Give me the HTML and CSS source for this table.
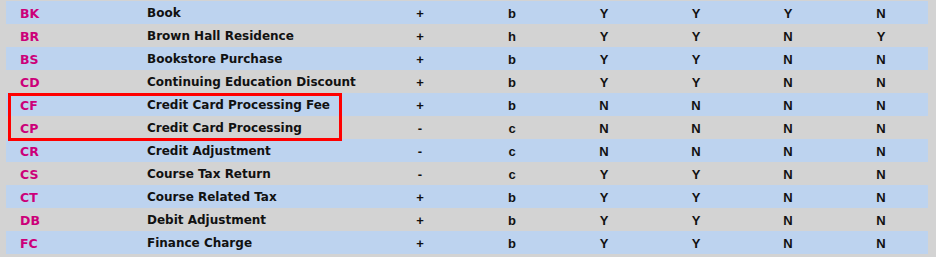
FILE: index.html
```html
<!DOCTYPE html>
<html>
<head>
<meta charset="utf-8">
<link rel="stylesheet" href="styles.css">
</head>
<body>
<div class="wrap">
  <div class="table">
    <div class="row alt"><span class="code">BK</span><span class="desc">Book</span><span class="c">+</span><span class="c">b</span><span class="c">Y</span><span class="c">Y</span><span class="c">Y</span><span class="c">N</span></div>
    <div class="row"><span class="code">BR</span><span class="desc">Brown Hall Residence</span><span class="c">+</span><span class="c">h</span><span class="c">Y</span><span class="c">Y</span><span class="c">N</span><span class="c">Y</span></div>
    <div class="row alt"><span class="code">BS</span><span class="desc">Bookstore Purchase</span><span class="c">+</span><span class="c">b</span><span class="c">Y</span><span class="c">Y</span><span class="c">N</span><span class="c">N</span></div>
    <div class="row"><span class="code">CD</span><span class="desc">Continuing Education Discount</span><span class="c">+</span><span class="c">b</span><span class="c">Y</span><span class="c">Y</span><span class="c">N</span><span class="c">N</span></div>
    <div class="row alt"><span class="code">CF</span><span class="desc">Credit Card Processing Fee</span><span class="c">+</span><span class="c">b</span><span class="c">N</span><span class="c">N</span><span class="c">N</span><span class="c">N</span></div>
    <div class="row"><span class="code">CP</span><span class="desc">Credit Card Processing</span><span class="c">-</span><span class="c">c</span><span class="c">N</span><span class="c">N</span><span class="c">N</span><span class="c">N</span></div>
    <div class="row alt"><span class="code">CR</span><span class="desc">Credit Adjustment</span><span class="c">-</span><span class="c">c</span><span class="c">N</span><span class="c">N</span><span class="c">N</span><span class="c">N</span></div>
    <div class="row"><span class="code">CS</span><span class="desc">Course Tax Return</span><span class="c">-</span><span class="c">c</span><span class="c">Y</span><span class="c">Y</span><span class="c">N</span><span class="c">N</span></div>
    <div class="row alt"><span class="code">CT</span><span class="desc">Course Related Tax</span><span class="c">+</span><span class="c">b</span><span class="c">Y</span><span class="c">Y</span><span class="c">N</span><span class="c">N</span></div>
    <div class="row"><span class="code">DB</span><span class="desc">Debit Adjustment</span><span class="c">+</span><span class="c">b</span><span class="c">Y</span><span class="c">Y</span><span class="c">N</span><span class="c">N</span></div>
    <div class="row alt"><span class="code">FC</span><span class="desc">Finance Charge</span><span class="c">+</span><span class="c">b</span><span class="c">Y</span><span class="c">Y</span><span class="c">N</span><span class="c">N</span></div>
  </div>
  <div class="highlight"></div>
</div>
</body>
</html>
```

FILE: styles.css
```css
html, body {
  margin: 0;
  padding: 0;
  background: #d3d3d3;
}
.wrap {
  position: relative;
  padding: 1px 8px 0 6px;
}
.table {
  display: flex;
  flex-direction: column;
}
.row {
  display: grid;
  grid-template-columns: 141px 227px 92px 92px 92px 92px 92px 94px;
  height: 23px;
  align-items: center;
}
.row.alt {
  background: #bdd3ef;
}
.code {
  padding-left: 14px;
  padding-top: 1px;
  font-family: "DejaVu Sans", sans-serif;
  font-weight: bold;
  font-size: 12.5px;
  color: #cc0079;
}
.desc {
  padding-top: 1px;
  font-family: "DejaVu Sans", sans-serif;
  font-weight: bold;
  font-size: 12px;
  color: #111;
  white-space: nowrap;
}
.c {
  padding-top: 1px;
  text-align: center;
  font-family: "Liberation Sans", Arial, sans-serif;
  font-weight: bold;
  font-size: 13px;
  color: #111;
}
.highlight {
  position: absolute;
  left: 8px;
  top: 93px;
  width: 328px;
  height: 42px;
  border: 3px solid #ff0000;
}
```
